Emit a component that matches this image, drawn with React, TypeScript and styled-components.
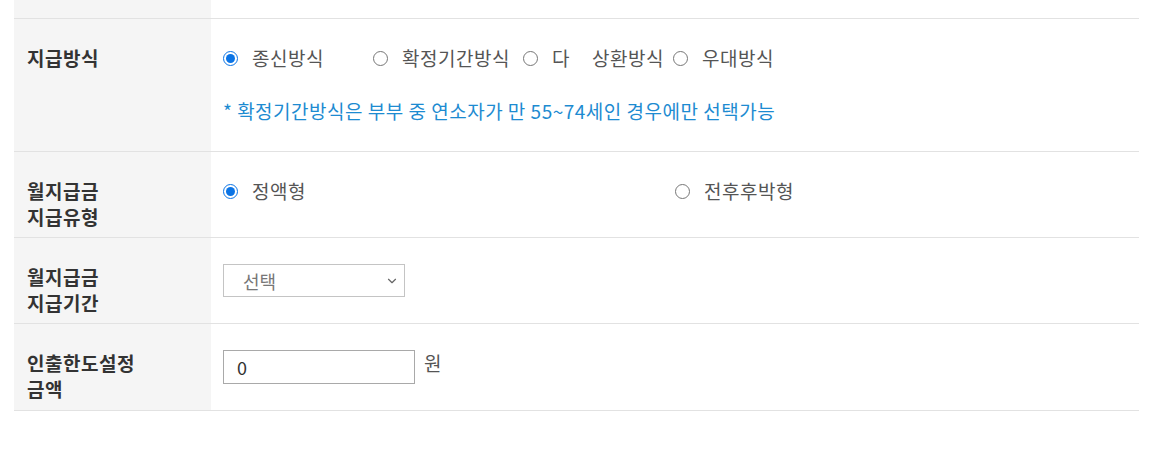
import React from "react";
import styled, { createGlobalStyle } from "styled-components";
import { ChevronDown } from "lucide-react";

const GlobalStyle = createGlobalStyle`
  body {
    margin: 0;
    background: #fff;
    font-family: "Noto Sans CJK KR", "Noto Sans", sans-serif;
  }
`;

const Table = styled.div`
  margin: 0 11px 0 14px;
  display: grid;
  grid-template-columns: 197px 1fr;
  border-bottom: 1px solid #e2e2e2;
`;

const Label = styled.div`
  background: #f5f5f5;
  padding: 26px 12px 7px 13px;
  font-size: 19px;
  letter-spacing: 0.5px;
  line-height: 26px;
  font-weight: 600;
  color: #333;
  border-top: 1px solid #e2e2e2;
`;

const Cell = styled.div<{ $last?: boolean }>`
  padding: 26px 12px ${(p) => (p.$last ? 26 : 25)}px 12px;
  font-size: 19px;
  letter-spacing: 0.5px;
  line-height: 26px;
  color: #555;
  border-top: 1px solid #e2e2e2;
`;

const TopLabel = styled.div`
  background: #f5f5f5;
  height: 18px;
`;

const TopCell = styled.div`
  height: 18px;
`;

const RadioRow = styled.div`
  display: flex;
  align-items: center;
`;

const Option = styled.label<{ $width?: string }>`
  display: inline-flex;
  align-items: center;
  width: ${(p) => p.$width || "auto"};
  color: #555;
  cursor: pointer;
  white-space: nowrap;
`;

const Radio = styled.input.attrs({ type: "radio" })`
  width: 15px;
  height: 15px;
  margin: 0 14px 0 0;
  accent-color: #0b74e5;
`;

const Spacer = styled.span`
  display: inline-block;
  width: 22px;
`;

const Note = styled.p`
  margin: 27px 0 2px;
  color: #1d8bd1;
`;

const SelectWrap = styled.div`
  position: relative;
  width: 182px;
  height: 33px;
`;

const Select = styled.select`
  appearance: none;
  width: 100%;
  height: 100%;
  border: 1px solid #c4c4c4;
  background: #fff;
  padding: 0 30px 0 19px;
  font-family: inherit;
  font-size: 18px;
  color: #777;
  outline: none;
`;

const Chevron = styled(ChevronDown)`
  position: absolute;
  right: 6px;
  top: 10px;
  color: #666;
  pointer-events: none;
`;

const InputRow = styled.div`
  display: flex;
  align-items: flex-start;
  gap: 9px;
`;

const Input = styled.input`
  width: 192px;
  height: 34px;
  box-sizing: border-box;
  border: 1px solid #a9a9a9;
  padding: 0 13px;
  font-family: inherit;
  font-size: 18px;
  color: #333;
  outline: none;
`;

const Unit = styled.span`
  color: #555;
`;

export default function App() {
  return (
    <>
      <GlobalStyle />
      <Table>
        <TopLabel />
        <TopCell />

        <Label>지급방식</Label>
        <Cell>
          <RadioRow>
            <Option $width="150px">
              <Radio name="pay" defaultChecked />
              종신방식
            </Option>
            <Option $width="150px">
              <Radio name="pay" />
              확정기간방식
            </Option>
            <Option $width="150px">
              <Radio name="pay" />
              다<Spacer />상환방식
            </Option>
            <Option>
              <Radio name="pay" />
              우대방식
            </Option>
          </RadioRow>
          <Note>* 확정기간방식은 부부 중 연소자가 만 55~74세인 경우에만 선택가능</Note>
        </Cell>

        <Label>
          월지급금
          <br />
          지급유형
        </Label>
        <Cell>
          <RadioRow>
            <Option $width="50%">
              <Radio name="type" defaultChecked />
              정액형
            </Option>
            <Option $width="50%">
              <Radio name="type" />
              전후후박형
            </Option>
          </RadioRow>
        </Cell>

        <Label>
          월지급금
          <br />
          지급기간
        </Label>
        <Cell>
          <SelectWrap>
            <Select defaultValue="">
              <option value="">선택</option>
            </Select>
            <Chevron size={14} strokeWidth={2} />
          </SelectWrap>
        </Cell>

        <Label>
          인출한도설정
          <br />
          금액
        </Label>
        <Cell $last>
          <InputRow>
            <Input defaultValue="0" />
            <Unit>원</Unit>
          </InputRow>
        </Cell>
      </Table>
    </>
  );
}
